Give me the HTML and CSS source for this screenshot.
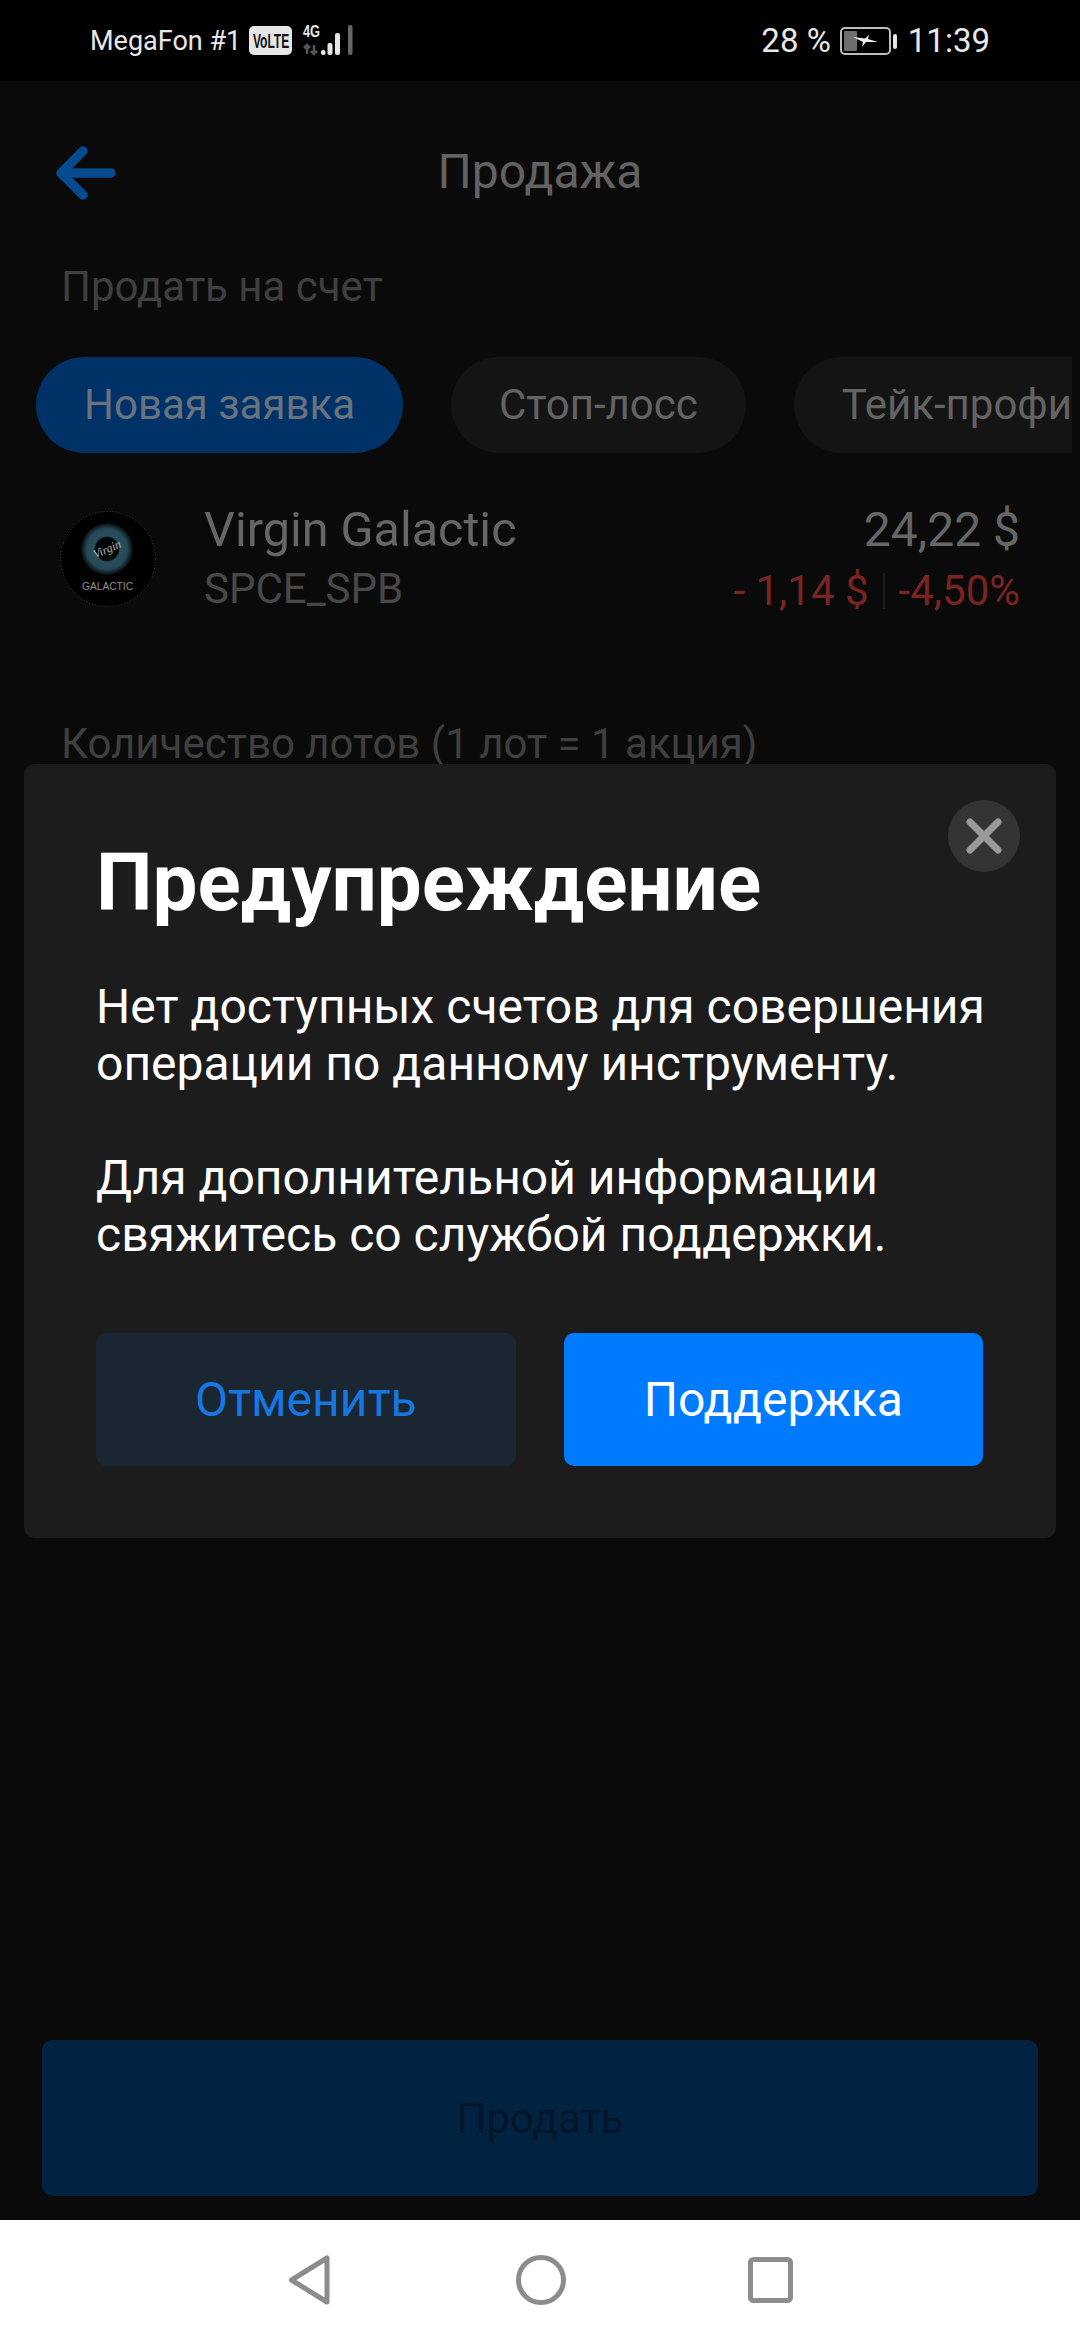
FILE: index.html
```html
<!DOCTYPE html>
<html lang="ru">
<head>
<meta charset="utf-8">
<title>Продажа</title>
<link rel="stylesheet" href="styles.css">
</head>
<body>
<div class="phone">
  <header class="status">
    <div class="status-left">
      <span class="carrier">MegaFon #1</span>
      <svg class="volte" width="43" height="29" viewBox="0 0 43 29">
        <rect width="43" height="29" rx="5" fill="#e6e6e6"/>
        <text transform="translate(4 22) scale(.6 1)" class="volte-text">VoLTE</text>
      </svg>
      <svg class="signal" width="52" height="32" viewBox="0 0 52 32">
        <text transform="translate(1 13) scale(.8 1)" class="net">4G</text>
        <path d="M5 30V21M2 24L5 21L8 24M12 21V30M9 27L12 30L15 27" fill="none" stroke="#555" stroke-width="2.500"/>
        <rect x="19" y="26" width="4.500" height="5" rx="2" fill="#e6e6e6"/>
        <rect x="25.500" y="19" width="5" height="12" rx="2" fill="#e6e6e6"/>
        <rect x="33" y="9" width="5" height="22" rx="2" fill="#e6e6e6"/>
        <rect x="46" y="1" width="4.500" height="30" rx="2" fill="#666"/>
      </svg>
    </div>
    <div class="status-right">
      <span>28 %</span>
      <svg class="battery" width="58" height="28" viewBox="0 0 58 28">
        <rect x="1" y="1" width="49" height="26" rx="4" fill="none" stroke="#bdbdbd" stroke-width="2"/>
        <rect x="4" y="4" width="13" height="20" rx="1" fill="#6e6e6e"/>
        <path d="M13 10L25 11.500L29 8L28 12L38 15L26 15L22 20L23 15Z" fill="#f0f0f0"/>
        <rect x="53" y="7" width="4" height="15" rx="2" fill="#e6e6e6"/>
      </svg>
      <span>11:39</span>
    </div>
  </header>

  <main class="app">
    <div class="topbar">
      <svg class="back" width="62" height="54" viewBox="0 0 62 54">
        <path d="M57 27H7M29 5L7 27L29 49" fill="none" stroke="#064a8f" stroke-width="9.500" stroke-linecap="round" stroke-linejoin="round"/>
      </svg>
      <h1 class="title">Продажа</h1>
    </div>
    <p class="label account">Продать на счет</p>
    <div class="tabs">
      <span class="tab active">Новая заявка</span>
      <span class="tab">Стоп-лосс</span>
      <span class="tab cut">Тейк-профи</span>
    </div>
    <section class="instrument">
      <svg class="logo" width="96" height="96" viewBox="0 0 96 96">
        <defs>
          <radialGradient id="eye">
            <stop offset="0" stop-color="#000"/>
            <stop offset="0.44" stop-color="#04080b"/>
            <stop offset="0.50" stop-color="#2c4d5c"/>
            <stop offset="0.78" stop-color="#264857"/>
            <stop offset="1" stop-color="#070b0e"/>
          </radialGradient>
        </defs>
        <circle cx="48" cy="48" r="47.500" fill="#000" stroke="#444" stroke-dasharray="1 2"/>
        <circle cx="47" cy="38" r="26" fill="url(#eye)"/>
        <text x="47" y="42" transform="rotate(-24 47 38)" class="logo-virgin">Virgin</text>
        <text x="22" y="79" textLength="51" lengthAdjust="spacingAndGlyphs" class="logo-galactic">GALACTIC</text>
      </svg>
      <div class="names">
        <div class="name">Virgin Galactic</div>
        <div class="ticker">SPCE_SPB</div>
      </div>
      <div class="prices">
        <div class="price">24,22 $</div>
        <div class="change"><span>- 1,14 $</span><i class="sep"></i><span>-4,50%</span></div>
      </div>
    </section>
    <p class="label lots">Количество лотов (1 лот = 1 акция)</p>
    <div class="spacer"></div>
    <button class="sell">Продать</button>
  </main>

  <nav class="nav">
    <svg class="nav-back" width="42" height="50" viewBox="0 0 42 50"><path d="M39 3V47L3.500 25Z" fill="none" stroke="#8c8c8c" stroke-width="5" stroke-linejoin="round"/></svg>
    <svg width="50" height="50" viewBox="0 0 50 50"><circle cx="25" cy="25" r="22.500" fill="none" stroke="#8c8c8c" stroke-width="5"/></svg>
    <svg width="45" height="46" viewBox="0 0 45 46"><rect x="2.500" y="2.500" width="40" height="41" rx="3" fill="none" stroke="#8c8c8c" stroke-width="5"/></svg>
  </nav>

  <aside class="modal">
    <button class="close" aria-label="Закрыть">
      <svg width="36" height="36" viewBox="0 0 36 36"><path d="M4 4L32 32M32 4L4 32" stroke="#9a9a9a" stroke-width="7" stroke-linecap="round"/></svg>
    </button>
    <h2 class="modal-title">Предупреждение</h2>
    <p class="modal-text">Нет доступных счетов для совершения<br>операции по данному инструменту.</p>
    <p class="modal-text second">Для дополнительной информации<br>свяжитесь со службой поддержки.</p>
    <div class="actions">
      <button class="btn cancel">Отменить</button>
      <button class="btn support">Поддержка</button>
    </div>
  </aside>
</div>
</body>
</html>
```

FILE: styles.css
```css
* { box-sizing: border-box; }
html, body { margin: 0; padding: 0; background: #0a0a0a; }
body { font-family: Roboto, "Noto Sans", sans-serif; white-space: nowrap; }
.phone {
  position: relative;
  width: 1080px;
  height: 2340px;
  display: flex;
  flex-direction: column;
  overflow: hidden;
}
.status {
  height: 81px;
  flex: none;
  background: #000;
  color: #e8e8e8;
  display: flex;
  align-items: center;
  justify-content: space-between;
  padding: 0 90px 0 90px;
}
.status-left, .status-right { display: flex; align-items: center; }
.carrier { font-size: 27px; }
.volte { margin-left: 8px; display: block; }
.volte-text { font: 700 20px "Liberation Sans", sans-serif; fill: #111; }
.signal { margin-left: 10px; margin-top: -2px; display: block; }
.net { font: 700 16px "Liberation Sans", sans-serif; fill: #e6e6e6; }
.status-right { font-size: 33px; font-weight: 400; }
.battery { margin: 0 10px 0 9px; display: block; }

.app {
  flex: 1;
  display: flex;
  flex-direction: column;
  background: #0a0a0a;
  min-height: 0;
}
.topbar {
  position: relative;
  height: 184px;
  flex: none;
  padding-top: 2px;
  display: flex;
  justify-content: center;
}
.back { position: absolute; left: 54px; top: 65px; }
.title {
  margin: 0;
  padding-top: 61px;
  font-size: 48px;
  line-height: 56px;
  font-weight: 400;
  color: #626262;
}
.label {
  margin: 0;
  padding-left: 61px;
  font-size: 42px;
  line-height: 48px;
  color: #3f3f3f;
}
.account { margin-top: -2px; }
.tabs {
  margin: 46px 8px 0 36px;
  height: 96px;
  flex: none;
  display: flex;
  gap: 48px;
  overflow: hidden;
}
.tab {
  flex: none;
  height: 96px;
  border-radius: 48px;
  padding: 0 48px;
  background: #141414;
  color: #636363;
  font-size: 42px;
  line-height: 96px;
}
.tab.active { background: #003167; color: #69737f; }
.tab.cut { padding-right: 0; border-radius: 48px 0 0 48px; flex: 1 0 auto; }
.instrument {
  margin-top: 58px;
  padding: 0 60px 0 60px;
  display: flex;
  align-items: flex-start;
}
.logo { flex: none; display: block; }
.logo-virgin { font: italic 400 12px "Liberation Serif", serif; fill: #b5b5b5; text-anchor: middle; }
.logo-galactic { font: 400 11px "Liberation Sans", sans-serif; fill: #8f8f8f; }
.names { margin-left: 48px; flex: 1; }
.name { font-size: 48.500px; line-height: 56px; color: #666; margin-top: -9px; }
.ticker { font-size: 42px; line-height: 50px; color: #484848; margin-top: 6px; }
.prices { text-align: right; }
.price { font-size: 48px; line-height: 56px; color: #666; margin-top: -9px; }
.change {
  display: flex;
  align-items: center;
  justify-content: flex-end;
  gap: 14px;
  font-size: 42px;
  line-height: 50px;
  color: #7a2323;
  margin-top: 8px;
}
.sep { width: 2px; height: 36px; background: #1c1c1c; }
.lots { margin-top: 104px; }
.spacer { flex: 1; }
.sell {
  flex: none;
  align-self: center;
  width: 996px;
  height: 156px;
  margin-bottom: 24px;
  border: 0;
  border-radius: 10px;
  background: #022242;
  color: #03162b;
  font: 400 42px Roboto, sans-serif;
}

.nav {
  height: 120px;
  flex: none;
  background: #fff;
  display: flex;
  align-items: center;
  justify-content: center;
  gap: 182px;
}
.nav svg { display: block; }
.nav-back { margin-right: 4px; }

.modal {
  position: absolute;
  left: 24px;
  top: 764px;
  width: 1032px;
  height: 774px;
  border-radius: 10px;
  background: #1c1c1c;
  padding: 77px 73px 0 72px;
  color: #fff;
}
.close {
  position: absolute;
  right: 36px;
  top: 36px;
  width: 72px;
  height: 72px;
  padding: 0;
  border: 0;
  border-radius: 50%;
  background: #343434;
  display: flex;
  align-items: center;
  justify-content: center;
}
.modal-title {
  margin: 0;
  font-size: 80px;
  line-height: 84px;
  font-weight: 700;
}
.modal-text {
  margin: 53px 0 0;
  font-size: 48px;
  line-height: 57px;
  font-weight: 400;
}
.modal-text.second { margin-top: 57px; }
.actions {
  margin-top: 70px;
  display: flex;
  gap: 48px;
}
.btn {
  flex: 1;
  height: 133px;
  border: 0;
  border-radius: 10px;
  font: 400 48px Roboto, sans-serif;
}
.cancel { background: #1a2632; color: #1677e0; }
.support { background: #007bff; color: #fff; }
```
